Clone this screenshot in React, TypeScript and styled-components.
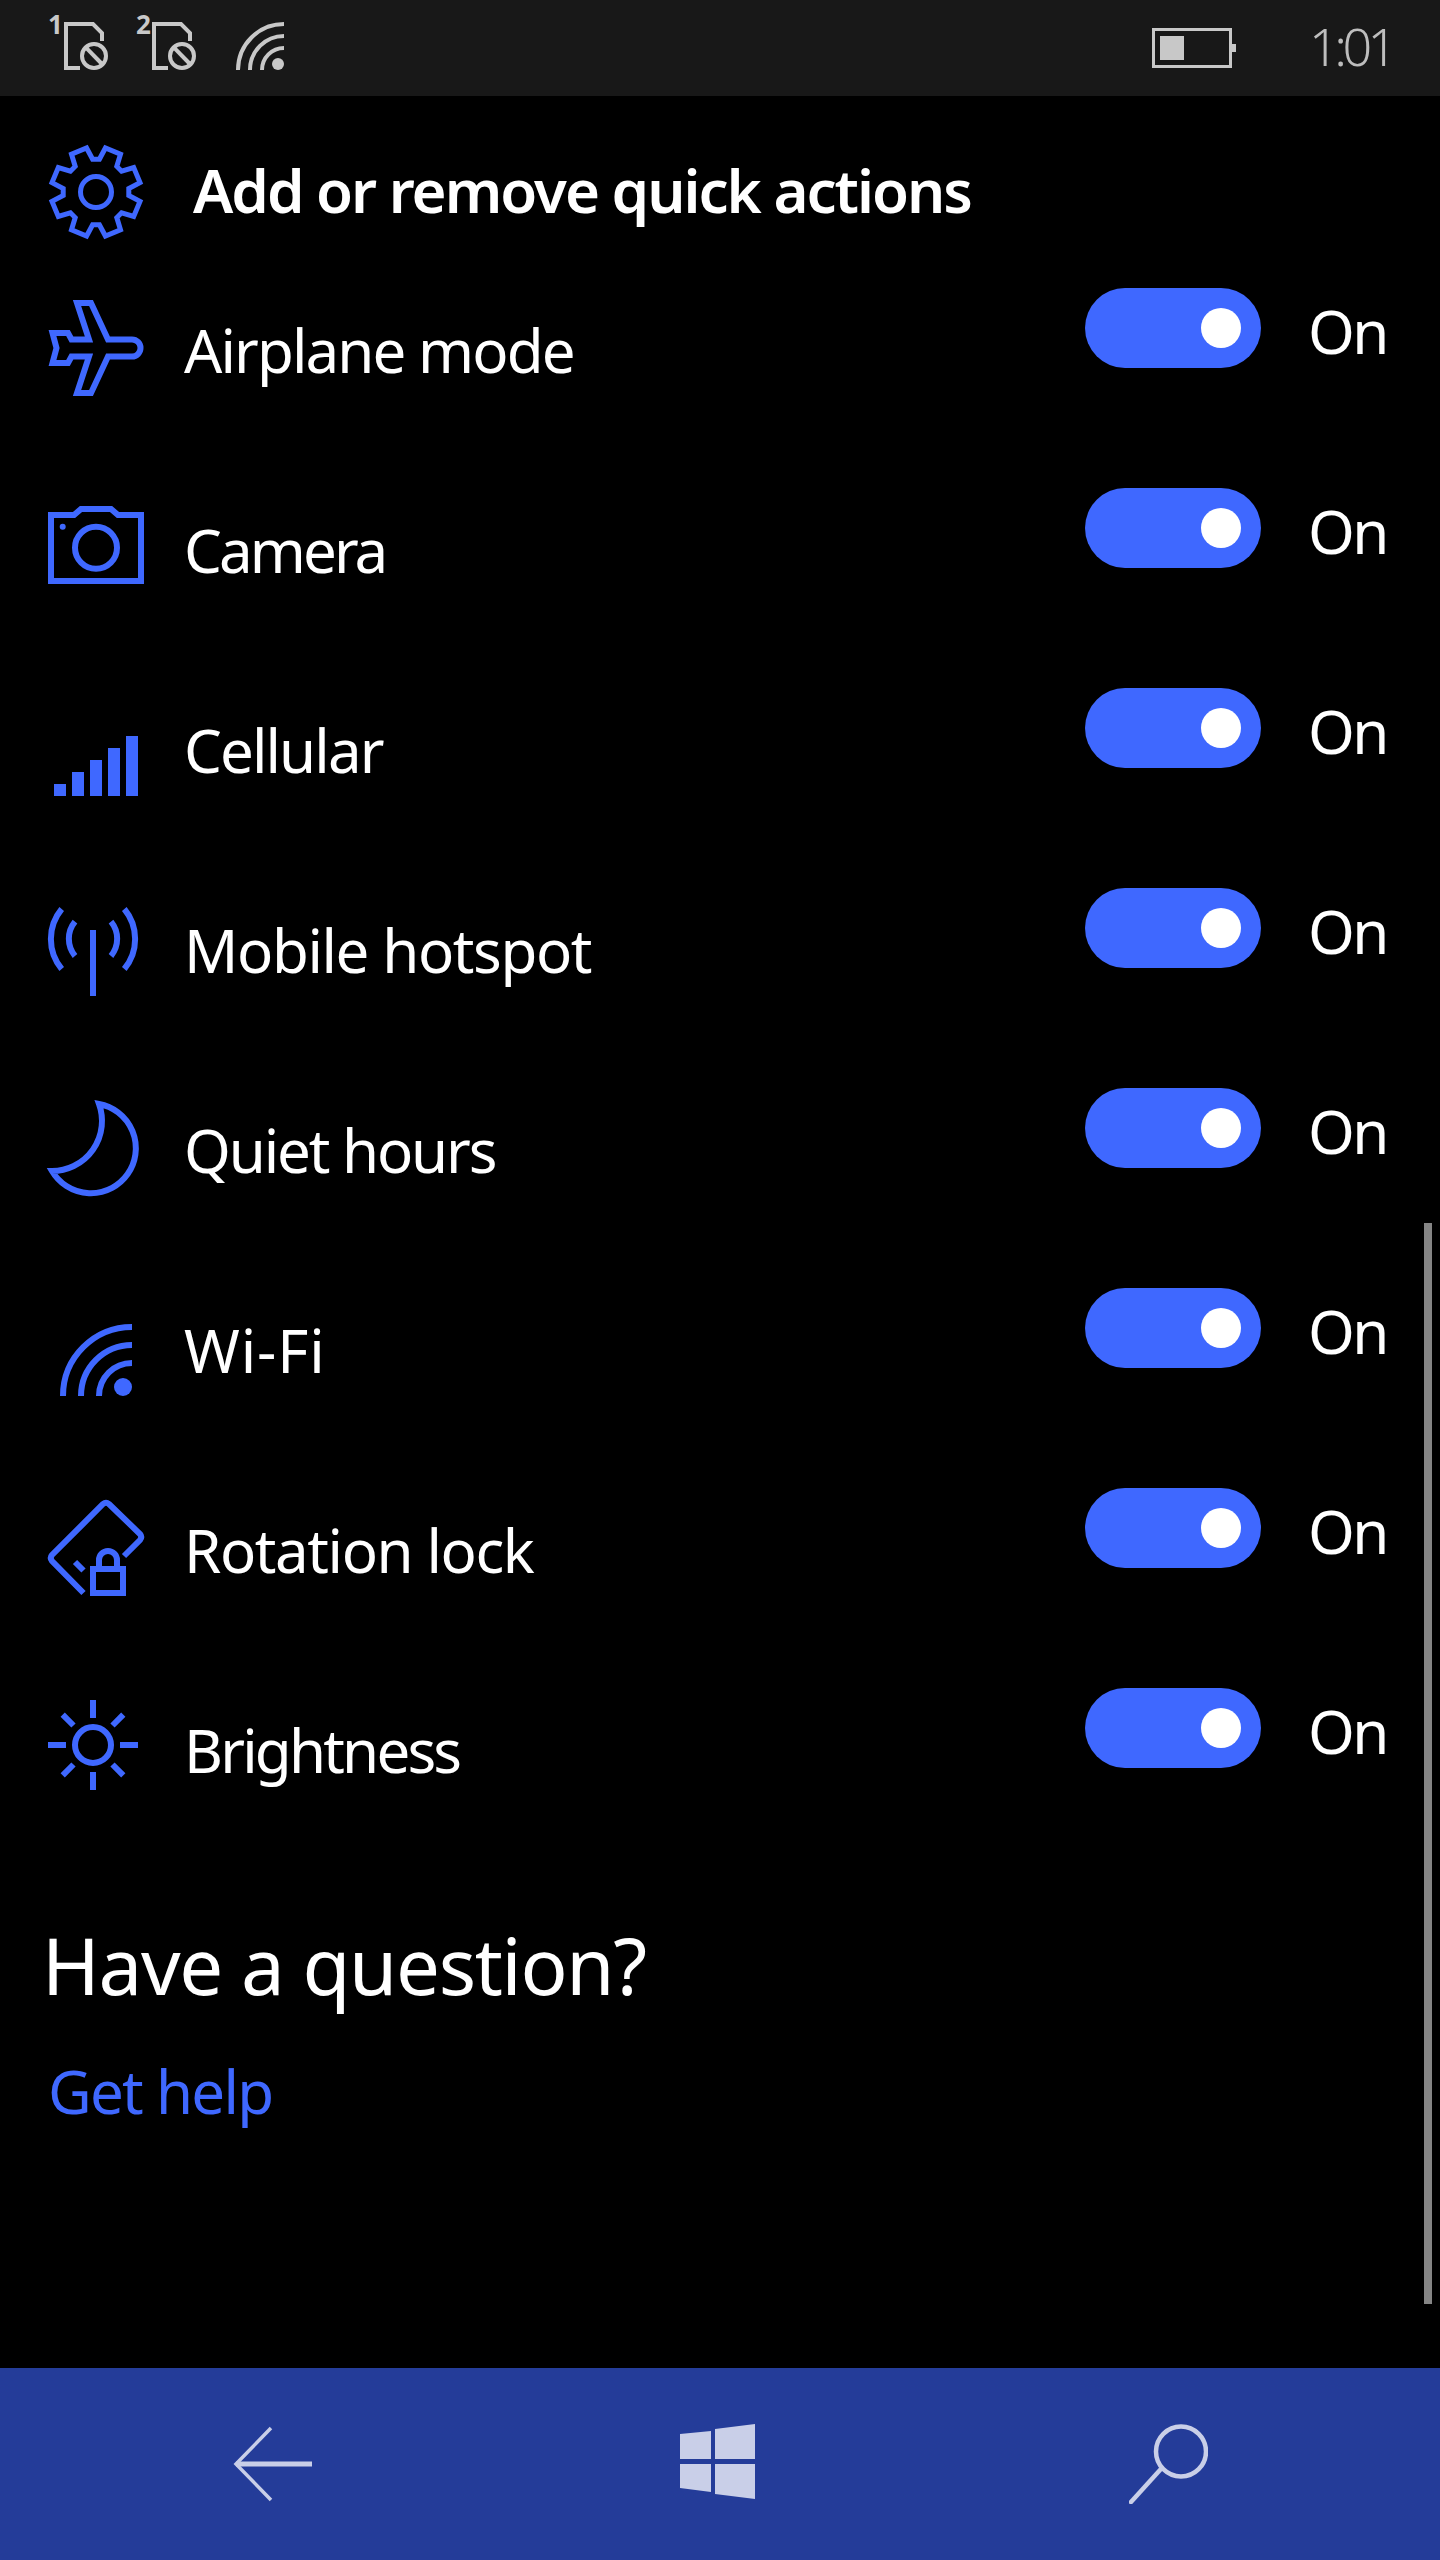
import React from "react";
import styled, { createGlobalStyle } from "styled-components";

const BLUE = "#3f68ff";
const FONT = `"Noto Sans", "Open Sans", sans-serif`;

const GlobalStyle = createGlobalStyle`
  html, body { margin: 0; padding: 0; background: #000; }
  * { box-sizing: border-box; }
`;

const Page = styled.div`
  width: 1440px;
  height: 2560px;
  display: flex;
  flex-direction: column;
  background: #000;
  color: #fff;
  font-family: ${FONT};
  overflow: hidden;
`;

const StatusBar = styled.header`
  height: 96px;
  flex: none;
  display: flex;
  align-items: flex-start;
  padding: 15px 0 0 48px;
  gap: 28px;
  background: #181818;
  color: #c8c8c8;
`;

const SimSlot = styled.div`
  position: relative;
  width: 60px;
  height: 55px;
`;

const SimDigit = styled.span`
  position: absolute;
  left: 0;
  top: -9px;
  font-size: 26px;
  line-height: 36px;
  font-weight: 700;
`;

const StatusWifi = styled.svg`
  display: block;
  width: 48px;
  height: 48px;
  margin: 7px 0 0 12px;
`;

const StatusRight = styled.div`
  margin-left: auto;
  display: flex;
  align-items: flex-start;
  gap: 73px;
`;

const Battery = styled.svg`
  display: block;
  width: 84px;
  height: 40px;
  margin-top: 13px;
`;

const Clock = styled.span`
  width: 131px;
  font-size: 52px;
  line-height: 62px;
  font-weight: 300;
  letter-spacing: -4.5px;
  color: #bdbdbd;
`;

const Content = styled.main`
  position: relative;
  flex: 1;
  min-height: 0;
`;

const Scrollbar = styled.div`
  position: absolute;
  right: 8px;
  top: 1127px;
  width: 8px;
  height: 1081px;
  background: #858585;
`;

const Header = styled.div`
  height: 192px;
  padding: 48px 0 0 48px;
  display: flex;
  align-items: flex-start;
  gap: 49px;
`;

const Title = styled.h1`
  margin: 6px 0 0;
  font-size: 60px;
  line-height: 80px;
  font-weight: 560;
  letter-spacing: -2px;
  color: #fff;
  white-space: nowrap;
`;

const Icon = styled.svg`
  display: block;
  flex: none;
  width: 96px;
  height: 96px;
  color: ${BLUE};
  overflow: visible;
`;

const Row = styled.div`
  height: 200px;
  display: flex;
  align-items: flex-start;
  padding-left: 48px;
`;

const RowIcon = styled.div`
  margin-top: 12px;
  width: 96px;
`;

const Label = styled.span<{ $tracking: number }>`
  margin: 22px 0 0 40px;
  font-size: 60px;
  line-height: 80px;
  font-weight: 375;
  letter-spacing: ${(p) => p.$tracking}px;
  white-space: nowrap;
`;

const Toggle = styled.div`
  margin-left: auto;
  width: 176px;
  height: 80px;
  border-radius: 40px;
  background: ${BLUE};
  display: flex;
  align-items: center;
  justify-content: flex-end;
  padding-right: 20px;
`;

const Knob = styled.div`
  width: 40px;
  height: 40px;
  border-radius: 50%;
  background: #fff;
`;

const StateText = styled.span`
  width: 179px;
  padding: 3px 0 0 47px;
  font-size: 60px;
  line-height: 80px;
  font-weight: 375;
  letter-spacing: -2.5px;
`;

const Help = styled.section`
  margin-top: 27px;
`;

const Question = styled.h2`
  margin: 0 0 0 42px;
  font-size: 78px;
  line-height: 100px;
  font-weight: 375;
  letter-spacing: -1.3px;
  white-space: nowrap;
`;

const HelpLink = styled.a`
  display: block;
  margin: 36px 0 0 48px;
  font-size: 60px;
  line-height: 80px;
  font-weight: 375;
  letter-spacing: -1.7px;
  color: ${BLUE};
`;

const NavBar = styled.nav`
  height: 192px;
  flex: none;
  display: grid;
  grid-template-columns: 447px 449px 79px;
  align-content: start;
  padding: 56px 0 0 233px;
  background: #243c99;
  color: #c9cfe8;
`;

const NavIcon = styled.svg`
  display: block;
  height: 80px;
`;

const gearPoints = (() => {
  const c = 48;
  const pts: string[] = [];
  const at = (deg: number, r: number) => {
    const a = ((deg - 90) * Math.PI) / 180;
    return `${(c + r * Math.cos(a)).toFixed(1)},${(c + r * Math.sin(a)).toFixed(1)}`;
  };
  for (let k = 0; k < 8; k++) {
    const axis = 22.5 + 45 * k;
    pts.push(at(axis - 22.5 + 6, 33));
    pts.push(at(axis - 10.5, 45));
    pts.push(at(axis + 10.5, 45));
    pts.push(at(axis + 22.5 - 6, 33));
  }
  return pts.join(" ");
})();

const stroke = { fill: "none", stroke: "currentColor", strokeWidth: 6 };

const GearIcon = () => (
  <Icon viewBox="0 0 96 96">
    <polygon points={gearPoints} {...stroke} strokeWidth={5} />
    <circle cx="48" cy="48" r="15.5" {...stroke} strokeWidth={5} />
  </Icon>
);

const AirplaneIcon = () => (
  <Icon viewBox="0 0 96 96">
    <path
      d="M29 3H43L60 39.5H84A8.5 8.5 0 0 1 84 56.5H60L43 93H29L41 56.5H23.5L20 63H4.5L8.5 48L4.5 33H20L23.5 39.5H41Z"
      {...stroke}
    />
  </Icon>
);

const CameraIcon = () => (
  <Icon viewBox="0 0 96 96">
    <path d="M3 15H26L33 9H63L70 15H93V81H3Z" {...stroke} />
    <circle cx="48" cy="47.7" r="21" {...stroke} />
    <circle cx="14.7" cy="26.7" r="3" fill="currentColor" />
  </Icon>
);

const CellularIcon = () => (
  <Icon viewBox="0 0 96 96" fill="currentColor">
    <rect x="6" y="84" width="12" height="12" />
    <rect x="24" y="72" width="12" height="24" />
    <rect x="42" y="60" width="12" height="36" />
    <rect x="60" y="48" width="12" height="48" />
    <rect x="78" y="36" width="12" height="60" />
  </Icon>
);

const HotspotIcon = () => (
  <Icon viewBox="0 0 96 96">
    <rect x="42" y="30" width="6" height="66" fill="currentColor" />
    <path d="M13.7 9A47 47 0 0 0 13.7 69" {...stroke} />
    <path d="M27 21.7A27 27 0 0 0 27 56" {...stroke} />
    <path d="M76.3 9A47 47 0 0 1 76.3 69" {...stroke} />
    <path d="M63 21.7A27 27 0 0 1 63 56" {...stroke} />
  </Icon>
);

const MoonIcon = () => (
  <Icon viewBox="0 0 96 96">
    <path d="M51 4A45 45 0 1 1 4 71A50 50 0 0 0 51 4Z" {...stroke} />
  </Icon>
);

const WifiIcon = () => (
  <Icon viewBox="0 0 96 96">
    <path d="M15 96A69 69 0 0 1 84 27" {...stroke} />
    <path d="M33 96A51 51 0 0 1 84 45" {...stroke} />
    <path d="M51 96A33 33 0 0 1 84 63" {...stroke} />
    <circle cx="75" cy="87" r="9" fill="currentColor" />
  </Icon>
);

const RotationIcon = () => (
  <Icon viewBox="0 0 96 96">
    <path
      d="M35.5 93L4 61Q1.5 58 4 55L55 4Q58 1.5 61 4L92 34Q94.5 37 92 40L76 56"
      {...stroke}
    />
    <path d="M27 62L35.5 70.5" {...stroke} />
    <rect x="45" y="69" width="30" height="24" {...stroke} />
    <path d="M51 66V60A9 9 0 0 1 69 60V66" {...stroke} />
  </Icon>
);

const BrightnessIcon = () => (
  <Icon viewBox="0 0 96 96">
    <circle cx="45" cy="45" r="18" {...stroke} />
    <path
      d="M45 0V18M45 72V90M0 45H18M72 45H90M14.7 14.7L25.5 25.5M75.3 14.7L64.5 25.5M14.7 75.3L25.5 64.5M75.3 75.3L64.5 64.5"
      {...stroke}
    />
  </Icon>
);

const SimGlyph = styled.svg`
  display: block;
  width: 60px;
  height: 55px;
`;

const SimIcon = () => (
  <SimGlyph viewBox="0 0 60 55">
    <g fill="none" stroke="currentColor" strokeWidth="4">
      <path d="M32 53H18V9H45L54 18V26" />
      <circle cx="46" cy="41" r="12" />
      <path d="M38 32.7L54 49" />
    </g>
  </SimGlyph>
);

const rows = [
  { label: "Airplane mode", tracking: -1.9, icon: <AirplaneIcon /> },
  { label: "Camera", tracking: -2.9, icon: <CameraIcon /> },
  { label: "Cellular", tracking: -1.9, icon: <CellularIcon /> },
  { label: "Mobile hotspot", tracking: -1.4, icon: <HotspotIcon /> },
  { label: "Quiet hours", tracking: -2.1, icon: <MoonIcon /> },
  { label: "Wi-Fi", tracking: 0.9, icon: <WifiIcon /> },
  { label: "Rotation lock", tracking: -1.4, icon: <RotationIcon /> },
  { label: "Brightness", tracking: -2.8, icon: <BrightnessIcon /> },
];

export default function App() {
  return (
    <Page>
      <GlobalStyle />
      <StatusBar>
        <SimSlot>
          <SimDigit>1</SimDigit>
          <SimIcon />
        </SimSlot>
        <SimSlot>
          <SimDigit>2</SimDigit>
          <SimIcon />
        </SimSlot>
        <StatusWifi viewBox="0 0 48 48">
          <g fill="none" stroke="currentColor" strokeWidth="4">
            <path d="M2 48A46 46 0 0 1 48 2" />
            <path d="M14 48A34 34 0 0 1 48 14" />
            <path d="M26 48A22 22 0 0 1 48 26" />
          </g>
          <circle cx="42" cy="42" r="6" fill="currentColor" />
        </StatusWifi>
        <StatusRight>
          <Battery viewBox="0 0 84 40">
            <rect x="1.5" y="1.5" width="77" height="37" fill="none" stroke="currentColor" strokeWidth="3" />
            <rect x="8" y="8" width="24" height="24" fill="currentColor" />
            <rect x="80" y="16" width="4" height="8" fill="currentColor" />
          </Battery>
          <Clock>1:01</Clock>
        </StatusRight>
      </StatusBar>
      <Content>
        <Header>
          <GearIcon />
          <Title>Add or remove quick actions</Title>
        </Header>
        {rows.map((row) => (
          <Row key={row.label}>
            <RowIcon>{row.icon}</RowIcon>
            <Label $tracking={row.tracking}>{row.label}</Label>
            <Toggle>
              <Knob />
            </Toggle>
            <StateText>On</StateText>
          </Row>
        ))}
        <Help>
          <Question>Have a question?</Question>
          <HelpLink>Get help</HelpLink>
        </Help>
        <Scrollbar />
      </Content>
      <NavBar>
        <NavIcon viewBox="0 0 79 80" width="79">
          <path d="M38 4L3 40L38 76" fill="none" stroke="currentColor" strokeWidth="3.5" />
          <path d="M3 40H79" fill="none" stroke="currentColor" strokeWidth="5" />
        </NavIcon>
        <NavIcon viewBox="0 0 75 80" width="75" fill="currentColor">
          <polygon points="0,10 31,7 31,35 0,35" />
          <polygon points="35,5 75,0 75,35 35,35" />
          <polygon points="0,40 31,40 31,68 0,64" />
          <polygon points="35,40 75,40 75,75 35,70" />
        </NavIcon>
        <NavIcon viewBox="0 0 79 80" width="79">
          <circle cx="52" cy="27.5" r="25" fill="none" stroke="currentColor" strokeWidth="4.5" />
          <path d="M31 46L2 78" fill="none" stroke="currentColor" strokeWidth="4.5" strokeLinecap="round" />
        </NavIcon>
      </NavBar>
    </Page>
  );
}
